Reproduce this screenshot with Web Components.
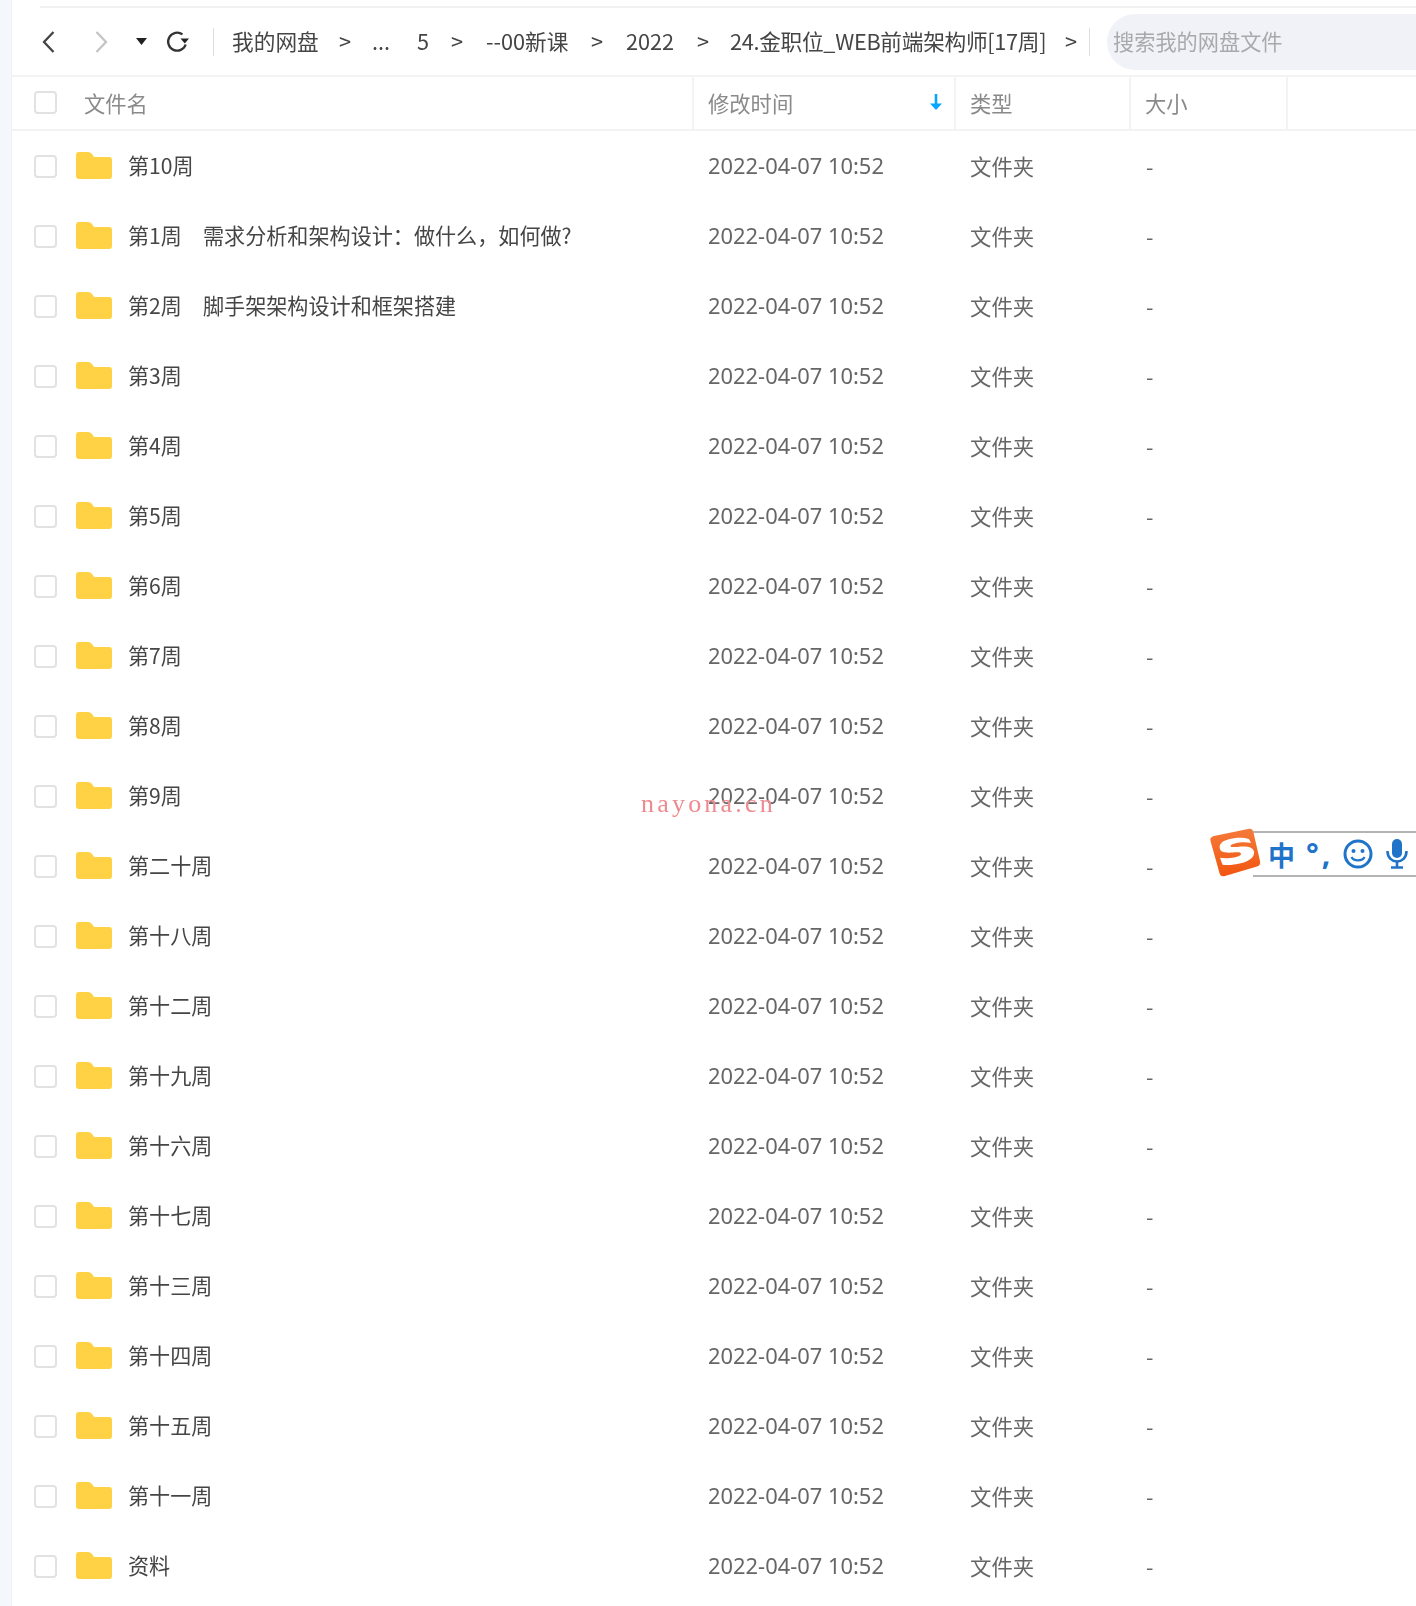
<!DOCTYPE html>
<html lang="zh">
<head>
<meta charset="utf-8">
<title>我的网盘</title>
<style>
  html, body { margin: 0; padding: 0; background: #fff; }
  body { font-family: "Noto Sans", "Noto Sans CJK SC", sans-serif; overflow: hidden; height: 1606px; }
</style>
</head>
<body>
<disk-app></disk-app>
<script>
const CJK = '"Noto Sans CJK SC", sans-serif';

class CheckBox extends HTMLElement {
  constructor() {
    super();
    this.attachShadow({ mode: 'open' }).innerHTML = `
      <style>
        :host { display: block; flex: none; width: 19px; height: 19px; border: 2px solid #e2e2e4; border-radius: 4px; background: #fff; }
      </style>`;
  }
}

class FolderIcon extends HTMLElement {
  constructor() {
    super();
    this.attachShadow({ mode: 'open' }).innerHTML = `
      <style>:host { display: block; flex: none; width: 36px; height: 27px; margin-bottom: 1px; } svg { display: block; }</style>
      <svg width="36" height="27" viewBox="0 0 36 27">
        <path d="M3 0H12C14 0 15 1 16 2L18 5H33C35 5 36 6 36 8V24C36 26 35 27 33 27H3C1 27 0 26 0 24V3C0 1 1 0 3 0Z" fill="#ffd145"/>
      </svg>`;
  }
}

class DiskToolbar extends HTMLElement {
  constructor() {
    super();
    const crumbs = [
      ['我的网盘', 232], ['>', 339], ['...', 372], ['5', 417], ['>', 451],
      ['--00新课', 486], ['>', 591], ['2022', 626], ['>', 697],
      ['24.金职位_WEB前端架构师[17周]', 730], ['>', 1065], ['', 1077]
    ];
    let html = '';
    crumbs.slice(0, -1).forEach(([text, start], i) => {
      // the long crumb is a little tighter than the others
      const tight = text.length > 10 ? 'letter-spacing:-0.3px;' : '';
      html += `<span style="width:${crumbs[i + 1][1] - start}px;${tight}">${text}</span>`;
    });
    this.attachShadow({ mode: 'open' }).innerHTML = `
      <style>
        :host { display: flex; align-items: center; height: 69px; font: 21.7px ${CJK}; color: #454545; box-sizing: border-box; border-bottom: 2px solid #f3f3f5; }
        svg { display: block; flex: none; }
        .nav { display: flex; align-items: center; width: 201px; padding-left: 30px; box-sizing: border-box; flex: none; }
        .sep { width: 1px; height: 28px; background: #dedede; flex: none; }
        .crumbs { display: flex; align-items: center; flex: none; width: 875px; padding: 0 0 2px 18px; box-sizing: border-box; white-space: nowrap; height: 100%; }
        .crumbs span { display: block; flex: none; }
        .search { margin-left: 17px; flex: 1; height: 56px; background: #f1f2f7; border-radius: 28px 0 0 28px; color: #a9a9ad; font-size: 21.2px; line-height: 54px; padding-left: 6px; white-space: nowrap; }
      </style>
      <div class="nav">
        <svg width="13" height="24" viewBox="0 0 13 24"><path d="M11.500 2 2 12l9.500 10" fill="none" stroke="#444" stroke-width="2.300"/></svg>
        <svg style="margin-left:40px" width="13" height="24" viewBox="0 0 13 24"><path d="M1.500 2 11 12 1.500 22" fill="none" stroke="#c4c4c4" stroke-width="2.300"/></svg>
        <svg style="margin-left:28px" width="11" height="7" viewBox="0 0 11 7"><path d="M0 0h11L5.500 7z" fill="#222"/></svg>
        <svg style="margin-left:18px" width="24" height="24" viewBox="0 0 24 24"><path d="M17.500 4.400A9 9 0 1 0 20.700 14.500" fill="none" stroke="#333" stroke-width="2.300"/><path d="M15.500 8.500h8.500L19.800 13.500z" fill="#222"/></svg>
      </div>
      <div class="sep"></div>
      <div class="crumbs">${html}</div>
      <div class="sep"></div>
      <div class="search">搜索我的网盘文件</div>`;
  }
}

class FileHeader extends HTMLElement {
  constructor() {
    super();
    this.attachShadow({ mode: 'open' }).innerHTML = `
      <style>
        :host { display: grid; grid-template-columns: 682px 262px 175px 157px 1fr; height: 52px; border-bottom: 2px solid #f3f3f5; font: 21.3px ${CJK}; color: #8a8a8a; align-items: stretch; }
        div { display: flex; align-items: center; border-right: 2px solid #f3f3f5; padding-left: 14px; padding-bottom: 2px; white-space: nowrap; box-sizing: border-box; }
        div.first { padding-left: 22px; }
        div.last { border: 0; }
        check-box { margin-right: 27px; }
        svg { margin-left: auto; margin-right: 12px; }
      </style>
      <div class="first"><check-box></check-box>文件名</div>
      <div>修改时间<svg width="12" height="16" viewBox="0 0 12 16"><path d="M4.700 0h2.600v9.500H12L6 16 0 9.500h4.700z" fill="#06a7ff"/></svg></div>
      <div>类型</div>
      <div>大小</div>
      <div class="last"></div>`;
  }
}

class FileRow extends HTMLElement {
  constructor() {
    super();
    this.attachShadow({ mode: 'open' }).innerHTML = `
      <style>
        :host { display: grid; grid-template-columns: 682px 262px 175px 1fr; height: 70px; align-items: center; font: 21.4px ${CJK}; color: #666; white-space: nowrap; }
        .name { display: flex; align-items: center; padding-left: 22px; color: #454545; font-size: 21.1px; }
        .label { padding-bottom: 2px; }
        check-box { margin-right: 19px; }
        folder-icon { margin-right: 16px; }
        .date { padding: 0 0 2px 14px; font: 21.9px "Noto Sans", sans-serif; }
        .type { padding: 0 0 2px 14px; }
        .size { padding: 0 0 2px 15px; }
      </style>
      <div class="name"><check-box></check-box><folder-icon></folder-icon><span class="label"><slot></slot></span></div>
      <div class="date">2022-04-07 10:52</div>
      <div class="type">文件夹</div>
      <div class="size">-</div>`;
  }
}

class ImeBar extends HTMLElement {
  constructor() {
    super();
    this.attachShadow({ mode: 'open' }).innerHTML = `
      <style>
        :host { position: absolute; left: 1209px; top: 828px; width: 207px; height: 49px; }
        .bar { position: absolute; left: 44px; right: 0; top: 3px; bottom: 0; background: #fff; border: solid #b4b4b4; border-width: 2px 0; box-sizing: border-box; display: flex; align-items: center; color: #1f74c9; }
        .logo { position: absolute; left: 0; top: 0; }
        .zh { font: 700 27px ${CJK}; margin-left: 15px; line-height: 1; }
        .pu { display: flex; align-items: baseline; margin-left: 11px; width: 27px; font: 700 30px "Noto Sans", sans-serif; letter-spacing: 3px; line-height: 1; }
        svg { display: block; flex: none; }
      </style>
      <div class="bar">
        <span class="zh">中</span>
        <span class="pu">°,</span>
        <svg style="margin-left:10px" width="30" height="30" viewBox="0 0 30 30"><circle cx="15" cy="15" r="13" fill="none" stroke="#1f74c9" stroke-width="3"/><circle cx="10.500" cy="12" r="2" fill="#1f74c9"/><circle cx="19.500" cy="12" r="2" fill="#1f74c9"/><path d="M8.500 18c2 4.500 11 4.500 13 0" fill="none" stroke="#1f74c9" stroke-width="2.200"/></svg>
        <svg style="margin-left:13px" width="22" height="30" viewBox="0 0 22 30"><rect x="6" y="0" width="10" height="19" rx="5" fill="#1f74c9"/><path d="M1.500 12c0 14 19 14 19 0" fill="none" stroke="#1f74c9" stroke-width="2.600"/><path d="M11 22v6M5 28.500h12" stroke="#1f74c9" stroke-width="2.600"/></svg>
      </div>
      <svg class="logo" width="52" height="49" viewBox="0 0 52 49">
        <defs><linearGradient id="g" x1="0" y1="0" x2="0" y2="1"><stop offset="0" stop-color="#f47a3a"/><stop offset="1" stop-color="#f2560f"/></linearGradient></defs>
        <path d="M5 8 39 1c3-.8 4.500.3 5.300 2.800L51 33c.7 3-.3 4.500-3 5.500L16 48c-3 .8-4.700 0-5.500-3L1.500 13c-.7-2.500.5-4.200 3.500-5z" fill="url(#g)"/>
        <path d="M40 11c-6-2-14-1.500-21 .5-6 1.700-9.500 5-8 9.500 1 3.500 6 4 13 3.500 5-.4 8-.3 8 1.500s-5 3.500-11 4c-4 .3-7 .2-10-.3l2.500 7c9 1 23-1 29-6.500 3.500-3.500 3.500-8 0-10-3.500-2-9-1.800-14-1.300-4 .3-7 .3-7-1 0-1.500 5-3 9-3.500 4-.4 8-.3 11.500 .6z" fill="#fff"/>
      </svg>`;
  }
}

class WaterMark extends HTMLElement {
  constructor() {
    super();
    this.attachShadow({ mode: 'open' }).innerHTML = `
      <style>
        :host { position: absolute; left: 641px; top: 788px; font: 26px/32px "Liberation Serif", serif; letter-spacing: 3.2px; color: #ee8a90; white-space: nowrap; }
      </style>
      <slot></slot>`;
  }
}

class DiskApp extends HTMLElement {
  constructor() {
    super();
    const names = ['第10周', '第1周　需求分析和架构设计：做什么，如何做?', '第2周　脚手架架构设计和框架搭建', '第3周', '第4周', '第5周', '第6周', '第7周', '第8周', '第9周',
      '第二十周', '第十八周', '第十二周', '第十九周', '第十六周', '第十七周', '第十三周', '第十四周', '第十五周', '第十一周', '资料'];
    this.attachShadow({ mode: 'open' }).innerHTML = `
      <style>
        :host { display: flex; height: 1606px; position: relative; overflow: hidden; filter: blur(0.35px); }
        .rail { width: 11px; flex: none; background: #f4f8fc; border-right: 1px solid #eef1f5; }
        main { flex: 1; min-width: 0; display: flex; flex-direction: column; }
        .top { height: 8px; margin-left: 28px; box-sizing: border-box; border-bottom: 2px solid #f1f1f3; flex: none; }
      </style>
      <div class="rail"></div>
      <main>
        <div class="top"></div>
        <disk-toolbar></disk-toolbar>
        <file-header></file-header>
        ${names.map(n => `<file-row>${n}</file-row>`).join('')}
      </main>
      <water-mark>nayona.cn</water-mark>
      <ime-bar></ime-bar>`;
  }
}

customElements.define('check-box', CheckBox);
customElements.define('folder-icon', FolderIcon);
customElements.define('disk-toolbar', DiskToolbar);
customElements.define('file-header', FileHeader);
customElements.define('file-row', FileRow);
customElements.define('ime-bar', ImeBar);
customElements.define('water-mark', WaterMark);
customElements.define('disk-app', DiskApp);
</script>
</body>
</html>
